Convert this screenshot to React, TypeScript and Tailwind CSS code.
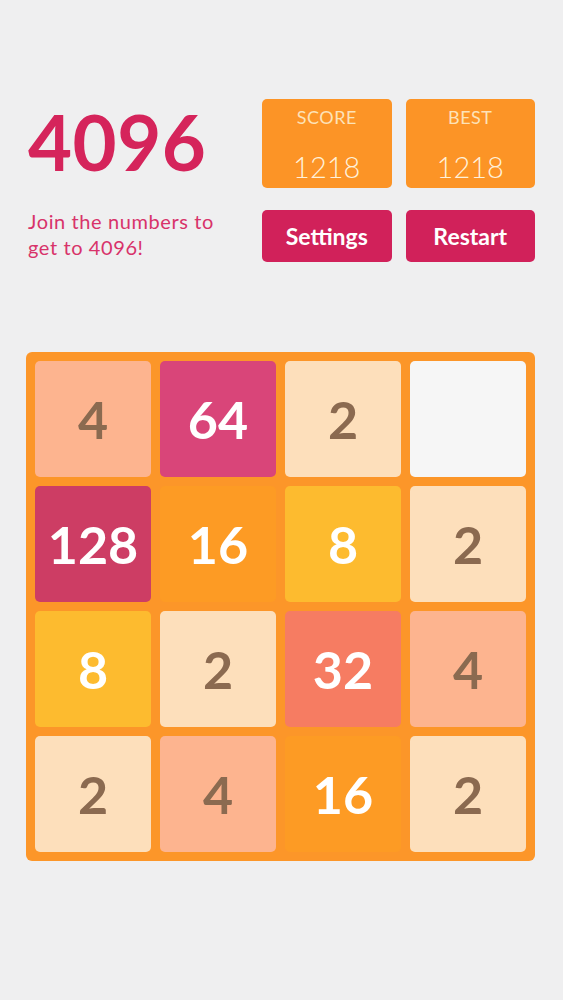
const FONT = "font-['Lato','Noto_Sans',sans-serif]";

const tileStyle: Record<string, string> = {
  '2': 'bg-[#fddfbb] text-[#8b6a50]',
  '4': 'bg-[#fdb48f] text-[#8b6a50]',
  '8': 'bg-[#fdbb2f] text-white',
  '16': 'bg-[#fd9b24] text-white',
  '32': 'bg-[#f67c62] text-white',
  '64': 'bg-[#d94579] text-white',
  '128': 'bg-[#cd3d64] text-white',
  empty: 'bg-[#f6f6f6]',
};

const rows: (number | null)[][] = [
  [4, 64, 2, null],
  [128, 16, 8, 2],
  [8, 2, 32, 4],
  [2, 4, 16, 2],
];

function ScoreBox({ label, value }: { label: string; value: number }) {
  return (
    <div className="h-[89px] rounded-[5px] bg-[#fc9426] flex flex-col items-center">
      <span className="mt-[6px] text-[18px] leading-[24px] text-[#fde2b8] tracking-[0.5px]">{label}</span>
      <span className="mt-[21px] text-[29px] leading-[34px] font-light text-[#fff1da]">{value}</span>
    </div>
  );
}

function Button({ children }: { children: string }) {
  return (
    <button className="h-[52px] rounded-[5px] bg-[#d1215a] text-white text-[23px] font-bold">
      {children}
    </button>
  );
}

export default function App() {
  return (
    <div className={`min-h-screen w-[563px] bg-[#efeff0] ${FONT}`}>
      <div className="pl-[26px] pr-[28px] pt-[99px]">
        <div className="flex justify-between">
          <div className="pl-[2px]">
            <h1 className="text-[76px] leading-[86px] font-bold text-[#d5245b] tracking-[0.5px]">4096</h1>
            <p className="mt-[23px] text-[20px] leading-[26px] text-[#d8336a] tracking-[0.6px]">
              Join the numbers to
              <br />
              get to 4096!
            </p>
          </div>
          <div className="grid grid-cols-2 w-[273px] gap-x-[14px] gap-y-[22px] content-start">
            <ScoreBox label="SCORE" value={1218} />
            <ScoreBox label="BEST" value={1218} />
            <Button>Settings</Button>
            <Button>Restart</Button>
          </div>
        </div>

        <div className="mt-[90px] rounded-[6px] bg-[#fc9629] p-[9px] grid grid-cols-4 gap-[9px]">
          {rows.flat().map((v, i) => {
            const cls = v === null ? tileStyle.empty : tileStyle[String(v)];
            return (
              <div
                key={i}
                className={`h-[116px] rounded-[5px] flex items-center justify-center text-[52px] font-bold ${cls}`}
              >
                {v}
              </div>
            );
          })}
        </div>
      </div>
    </div>
  );
}
